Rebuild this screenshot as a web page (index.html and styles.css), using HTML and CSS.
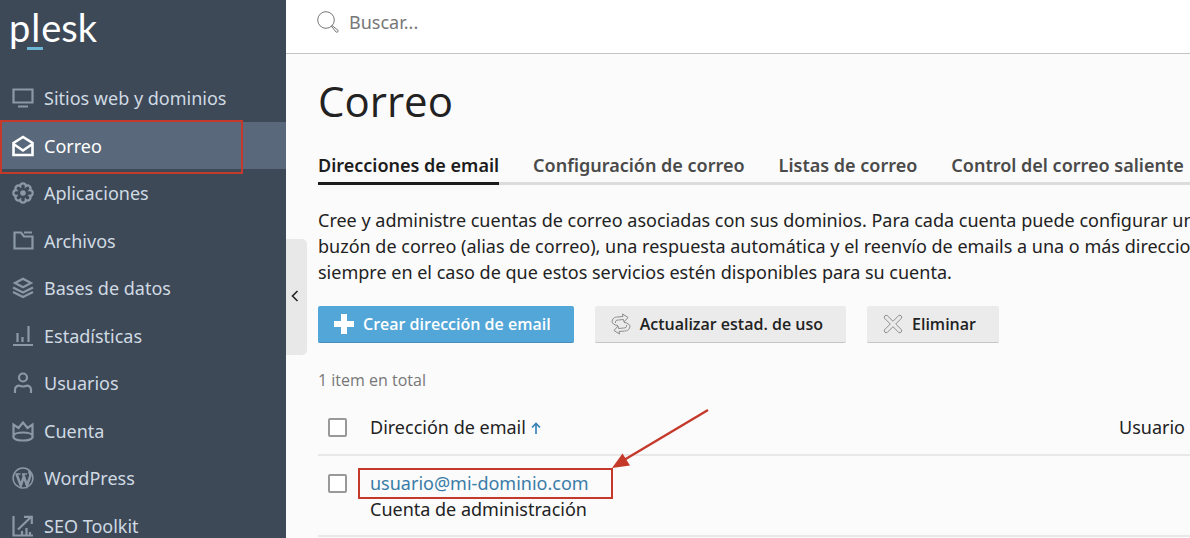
FILE: index.html
```html
<!DOCTYPE html>
<html lang="es">
<head>
  <meta charset="UTF-8" />
  <meta name="viewport" content="width=device-width, initial-scale=1.0" />
  <title>Correo - Plesk</title>
  <link rel="stylesheet" href="styles.css">
</head>
<body>
  <div class="layout">
    <!-- Sidebar -->
    <aside class="sidebar">
      <a class="logo" href="#"><span>p</span><span class="logo-line">l</span><span>esk</span></a>
      <nav>
        <ul class="menu">
          <li><a href="#">
            <svg class="icon" viewBox="0 0 22 22"><path d="M1.500 2.500h19v13h-19zM6 19.500h10"/></svg>
            Sitios web y dominios</a></li>
          <li class="active"><a href="#">
            <svg class="icon" viewBox="0 0 22 22"><path d="M1.500 8 11 2l9.500 6v12h-19zM1.500 9l9.500 6.500L20.500 9"/></svg>
            Correo</a><span class="mark mark-menu"></span></li>
          <li><a href="#">
            <svg class="icon" viewBox="0 0 22 22"><path d="M8.200 4.200a2.800 2.900 0 0 1 5.600 0a2.840 2.840 0 0 1 4 4a2.900 2.800 0 0 1 0 5.600a2.840 2.840 0 0 1-4 4a2.800 2.900 0 0 1-5.600 0a2.840 2.840 0 0 1-4-4a2.900 2.800 0 0 1 0-5.600a2.840 2.840 0 0 1 4-4z"/><circle class="fill" cx="11" cy="11" r="2.800"/></svg>
            Aplicaciones</a></li>
          <li><a href="#">
            <svg class="icon" viewBox="0 0 22 22"><path d="M2.500 2.500h6.500l3 4h8.500v12h-18zM12 2.500h8"/></svg>
            Archivos</a></li>
          <li><a href="#">
            <svg class="icon" viewBox="0 0 22 22"><path d="M11 1.800 19 6l-8 4.200L3 6zM1 10.500l10 5 10-5M1 15l10 5 10-5"/></svg>
            Bases de datos</a></li>
          <li><a href="#">
            <svg class="icon" viewBox="0 0 22 22"><path d="M1 20h20M5.500 17V8M10.500 17v-5M16.500 17V1"/></svg>
            Estadísticas</a></li>
          <li><a href="#">
            <svg class="icon" viewBox="0 0 22 22"><circle cx="11" cy="5.500" r="4"/><path d="M3 21v-3.500c0-3 3-4.500 5.500-3.500 1.700.7 3.300.7 5 0 2.500-1 5.500.5 5.500 3.500V21"/></svg>
            Usuarios</a></li>
          <li><a href="#">
            <svg class="icon" viewBox="0 0 22 22"><path d="M1.500 4.500v13c2 4 17 4 19 0v-13L15.500 8 11 2.500 6.500 8zM1.500 15.500c2-4 17-4 19 0"/></svg>
            Cuenta</a></li>
          <li><a href="#">
            <svg class="icon" viewBox="0 0 22 22"><circle cx="11" cy="11" r="9.900" stroke-width="1.500"/><path d="M3.500 7h5M10 7h5" stroke-width="1.300"/><path d="M4.500 7l4.300 11.500L11.700 10M11 7l4 11.500L18.300 9c.5-2-2-3.500-.5-5" stroke-width="2.500"/></svg>
            WordPress</a></li>
          <li><a href="#">
            <svg class="icon" viewBox="0 0 22 22"><path d="M1.500 1v19.500H21M6 14.500 19 2M12 1.800h7.800V9M10 20v-4M14.500 20v-7M18 20v-3"/></svg>
            SEO Toolkit</a></li>
        </ul>
      </nav>
    </aside>

    <div class="page">
      <button class="collapse" aria-label="Ocultar menú">
        <svg width="8" height="12" viewBox="0 0 8 12"><path d="M6.500 1 1.500 6l5 5"/></svg>
      </button>

      <!-- Search -->
      <header class="topbar">
        <svg width="22" height="22" viewBox="0 0 22 22"><circle cx="9" cy="9" r="8.300"/><path d="M15 14.500l6 4.800c.8 1-.8 2.600-1.800 1.800l-4.900-5.900z"/></svg>
        <input type="search" placeholder="Buscar..." aria-label="Buscar">
      </header>

      <main class="content">
        <h1>Correo</h1>

        <div class="tabs">
          <a class="current" href="#">Direcciones de email</a>
          <a href="#">Configuración de correo</a>
          <a href="#">Listas de correo</a>
          <a href="#">Control del correo saliente</a>
        </div>

        <p class="intro">Cree y administre cuentas de correo asociadas con sus dominios. Para cada cuenta puede configurar un<br>
          buzón de correo (alias de correo), una respuesta automática y el reenvío de emails a una o más direcciones,<br>
          siempre en el caso de que estos servicios estén disponibles para su cuenta.</p>

        <div class="actions">
          <button class="btn btn-primary">
            <svg width="20" height="20" viewBox="0 0 20 20"><path d="M7 0h6v7h7v6h-7v7H7v-7H0V7h7z"/></svg>
            Crear dirección de email
          </button>
          <button class="btn">
            <svg width="20" height="22" viewBox="0 0 20 22"><path d="M1 9.500C1 5.500 3.500 4 6.500 4l5.500-.5-.5-2.500 5.500 3.500-4 4.500-.5-2.500-5 .5C5 7 4 8 4.500 10M1 9.500l3 2.500 3 .5M19 12.500c0 4-2.500 5.500-5.500 5.500l-5.500.5.500 2.500L3 17.500 7 13l.5 2.500 5-.5c2.500 0 3.500-1 3-3M19 12.500 16 10l-3-.5"/></svg>
            Actualizar estad. de uso
          </button>
          <button class="btn">
            <svg width="20" height="20" viewBox="0 0 20 20"><path d="M4.200 1.500 10 7.300l5.800-5.800c1.600-1 3.700 1.100 2.700 2.700L12.700 10l5.800 5.800c1 1.600-1.100 3.700-2.700 2.700L10 12.700l-5.800 5.800c-1.600 1-3.700-1.100-2.700-2.700L7.300 10 1.500 4.200c-1-1.600 1.100-3.700 2.700-2.700z"/></svg>
            Eliminar
          </button>
        </div>

        <div class="total">1 item en total</div>

        <table class="list">
          <thead>
            <tr>
              <th class="check"><input type="checkbox" aria-label="Seleccionar todo"></th>
              <th><a href="#">Dirección de email
                <svg width="10" height="12" viewBox="0 0 10 12"><path d="M5 12V1.500M1 5.500l4-4 4 4"/></svg></a></th>
              <th class="user">Usuario</th>
            </tr>
          </thead>
          <tbody>
            <tr>
              <td class="check"><input type="checkbox" aria-label="Seleccionar usuario@mi-dominio.com"></td>
              <td>
                <div class="email">
                  <a href="#">usuario@mi-dominio.com</a>
                  <span class="mark mark-email"></span>
                  <svg class="arrow" width="98" height="62" viewBox="0 0 98 62"><path class="shaft" d="M96 2 12 52"/><path class="head" d="M0 60 10.500 45.500 18 57.500z"/></svg>
                </div>
                <div>Cuenta de administración</div>
              </td>
              <td></td>
            </tr>
          </tbody>
        </table>
      </main>
    </div>
  </div>
</body>
</html>
```

FILE: styles.css
```css
* {
  box-sizing: border-box;
}
body {
  margin: 0;
  font-family: "Noto Sans", "Open Sans", sans-serif;
  font-size: 18px;
  line-height: 26px;
  color: #222;
  background-color: #fbfbfb;
}
a {
  color: inherit;
  text-decoration: none;
}
svg {
  fill: none;
  flex-shrink: 0;
}
.layout {
  display: flex;
  height: 100vh;
  overflow: hidden;
}

/* Sidebar */
.sidebar {
  width: 286px;
  flex-shrink: 0;
  background-color: #3d4957;
  color: #d0dae3;
}
.logo {
  display: flex;
  gap: 1px;
  padding: 5px 9px 0;
  height: 74px;
  font-family: Lato, sans-serif;
  font-size: 38px;
  line-height: 44px;
  color: #fff;
}
.logo-line {
  position: relative;
}
.logo-line::after {
  content: "";
  position: absolute;
  left: -4px;
  top: 42px;
  width: 16px;
  height: 3px;
  background-color: #6db5d4;
}
.menu {
  list-style: none;
  margin: 0;
  padding: 0;
}
.menu li {
  position: relative;
}
.menu li:nth-child(odd) {
  margin-bottom: 1px;
}
.menu a {
  display: flex;
  align-items: center;
  gap: 10px;
  height: 47px;
  padding-left: 12px;
}
.menu .active {
  background-color: #59687a;
  color: #fff;
}
.icon {
  width: 22px;
  height: 22px;
  stroke: #8b98a6;
  stroke-width: 2.2;
}
.icon .fill {
  fill: #8b98a6;
  stroke: none;
}
.active .icon {
  stroke: #fff;
  stroke-width: 2.6;
}

/* Red highlights */
.mark {
  position: absolute;
  border: 2px solid #c5392b;
  pointer-events: none;
}
.mark-menu {
  left: 0;
  top: -2px;
  width: 243px;
  height: 54px;
  z-index: 1;
}
.mark-email {
  left: -12px;
  top: -2px;
  width: 255px;
  height: 31px;
}
.arrow {
  position: absolute;
  left: 242px;
  top: -62px;
}
.arrow .shaft {
  stroke: #c5392b;
  stroke-width: 2.4;
}
.arrow .head {
  fill: #c5392b;
}

/* Page */
.page {
  position: relative;
  flex: 1;
  min-width: 0;
}
.collapse {
  position: absolute;
  left: 0;
  top: 239px;
  width: 21px;
  height: 116px;
  padding: 0 3px 0 0;
  border: none;
  border-radius: 0 5px 5px 0;
  background-color: #e8e8e8;
  cursor: pointer;
}
.collapse svg {
  stroke: #222;
  stroke-width: 1.6;
}
.topbar {
  display: flex;
  align-items: center;
  gap: 10px;
  height: 54px;
  padding: 0 31px 10px;
  background-color: #fff;
  border-bottom: 1px solid #c4c4c4;
}
.topbar svg {
  stroke: #777;
}
.topbar input {
  flex: 1;
  padding: 0;
  border: none;
  outline: none;
  background: none;
  font: inherit;
}
.topbar input::placeholder {
  color: #777;
}
.content {
  padding: 19px 0 0 32px;
  overflow: hidden;
}
h1 {
  margin: 0;
  font-family: "Open Sans", sans-serif;
  font-size: 42px;
  font-weight: normal;
  line-height: 56px;
}
.tabs {
  display: flex;
  gap: 34px;
  margin-top: 19px;
  border-bottom: 3px solid #dcdcdc;
  font-weight: 600;
  color: #4a4a4a;
  white-space: nowrap;
}
.tabs a {
  padding: 4px 0;
  margin-bottom: -3px;
  border-bottom: 3px solid transparent;
}
.tabs .current {
  color: #1c1c1c;
  border-bottom-color: #1c1c1c;
}
.intro {
  margin: 22px 0 21px;
  white-space: nowrap;
}
.actions {
  display: flex;
  gap: 21px;
}
.btn {
  display: flex;
  align-items: center;
  gap: 9px;
  height: 37px;
  padding: 0 23px 0 16px;
  border: none;
  border-bottom: 1px solid #c4c4c4;
  border-radius: 2px;
  background-color: #ebebeb;
  color: #222;
  font: 600 16px "Open Sans", sans-serif;
  cursor: pointer;
}
.btn svg {
  stroke: #8c8c8c;
}
.btn-primary {
  background-color: #53a6d8;
  border-bottom-color: #468fbb;
  color: #fff;
}
.btn-primary svg {
  fill: #fff;
  stroke: none;
}
.total {
  margin: 24px 0 21px;
  font-family: "Open Sans", sans-serif;
  font-size: 16px;
  color: #777;
}

/* Table */
.list {
  width: 100%;
  border-collapse: collapse;
}
.list th {
  padding: 0 0 14px;
  text-align: left;
  font-weight: normal;
}
.list td {
  padding: 14px 0 13px;
  vertical-align: top;
}
.list tr {
  border-bottom: 2px solid #e8e8e8;
}
.list th.user {
  padding-right: 5px;
  text-align: right;
}
.list .check {
  width: 52px;
  padding-left: 10px;
}
.list th svg {
  stroke: #2f80b5;
  stroke-width: 1.6;
}
.list input {
  appearance: none;
  display: block;
  width: 19px;
  height: 19px;
  margin: 4px 0 3px;
  border: 2px solid #999;
  border-radius: 2px;
  background-color: #fff;
}
.email {
  position: relative;
  color: #3a7ca8;
}
```
